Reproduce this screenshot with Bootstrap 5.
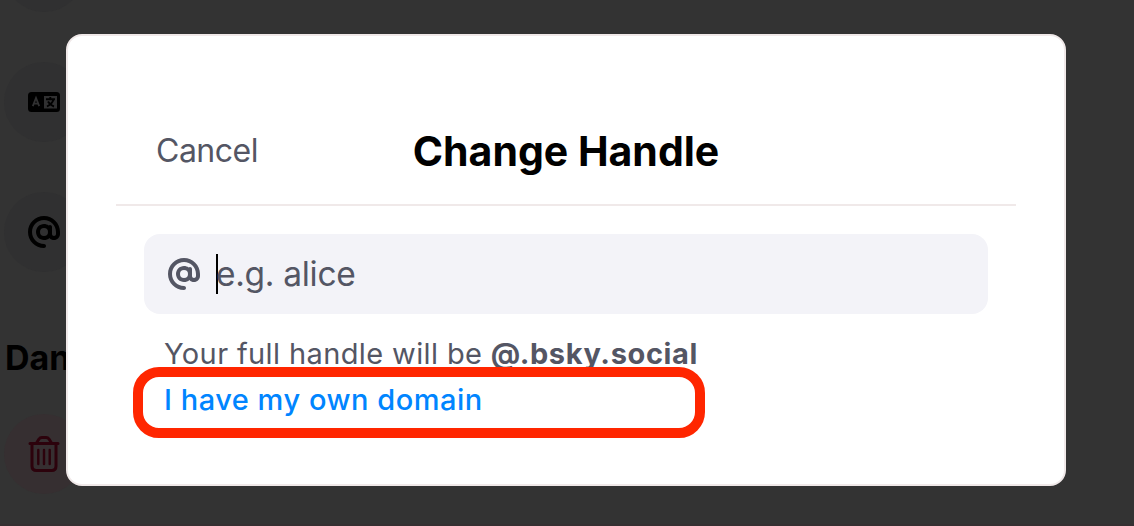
<!DOCTYPE html>
<html lang="en">
<head>
<meta charset="utf-8">
<meta name="viewport" content="width=device-width, initial-scale=1">
<title>Change Handle</title>
<link href="https://cdn.jsdelivr.net/npm/bootstrap@5.3.0/dist/css/bootstrap.min.css" rel="stylesheet">
<style>
body{font-family:Inter,"Liberation Sans",sans-serif;background:#333;height:526px;color:#000}
.settings{height:526px;padding-left:4px;border-bottom:2px solid #352f31}
.disc{width:80px;height:80px;background:#303031;flex:none}
.disc.danger-disc{background:#362f31}
.disc.first{margin-top:-68px}
.disc.lang{margin-top:50px}
.disc.handle{margin-top:50px}
.zone{font-size:34px;font-weight:700;line-height:40px;margin:66px 0 36px 1px;white-space:nowrap}
.sheet{left:66px;top:34px;width:1000px;height:452px;border:2px solid #f0e9e9;border-radius:16px;padding:78px 48px 0}
.sheet-head{height:92px;border-bottom:2px solid #f0e9e9;padding:0 40px;padding-bottom:16px}
.cancel{font-size:32px;letter-spacing:-.5px;color:#545664;line-height:40px}
.title{font-size:41px;font-weight:700;letter-spacing:0;line-height:48px;margin:0}
.field{margin:28px 28px 0;height:80px;border-radius:16px;background:#f3f3f8;padding:0 24px;color:#545664;font-size:34px}
.caret{width:2px;height:40px;background:#000;margin-left:16px}
.hint{letter-spacing:-.3px;margin:0 0 0 -2px;font-size:33.5px}
.line{font-size:29px;letter-spacing:.38px;line-height:46px;color:#545664;padding-left:48px;white-space:nowrap}
.line b{letter-spacing:.62px}
.first-line{margin-top:17px}
.line.own{color:#0085ff;font-weight:500;letter-spacing:.52px}
.marker{left:65px;top:331px;width:572px;height:71px;border:10px solid #ff2600;border-radius:26px}
</style>
</head>
<body class="position-relative overflow-hidden">
<aside class="settings d-flex flex-column overflow-hidden">
  <div class="disc first rounded-circle"></div>
  <div class="disc lang rounded-circle d-flex align-items-center justify-content-center">
    <svg width="32" height="20" viewBox="0 0 32 20"><rect width="32" height="20" rx="3.5"/><path d="M16 4h13v12.500H16z" fill="#303031"/><path d="M4.800 14.200 8 6l3.200 8.200M5.700 11.700h4.600" fill="none" stroke="#303031" stroke-width="1.800"/><path d="M18 7.200h9M22.300 5v2.200M25.500 7.500c-1 3.500-3.500 5.500-6.500 7M20 9.500c1.300 2.500 3 4 6 5" fill="none" stroke="#000" stroke-width="1.900"/></svg>
  </div>
  <div class="disc handle rounded-circle d-flex align-items-center justify-content-center">
    <svg width="32" height="32" viewBox="0 0 512 512"><path id="at" d="M256 64C150 64 64 150 64 256s86 192 192 192c17.700 0 32 14.300 32 32s-14.300 32-32 32C114.600 512 0 397.400 0 256S114.600 0 256 0S512 114.600 512 256v32c0 53-43 96-96 96c-29.300 0-55.600-13.200-73.200-33.900C320 371.100 289.500 384 256 384c-70.700 0-128-57.300-128-128s57.300-128 128-128c27.900 0 53.700 8.900 74.700 24.100c5.700-5 13.100-8.100 21.300-8.100c17.700 0 32 14.300 32 32v112c0 17.700 14.300 32 32 32s32-14.300 32-32V256c0-106-86-192-192-192zm64 192a64 64 0 1 0-128 0a64 64 0 1 0 128 0z"/></svg>
  </div>
  <div class="zone">Dan</div>
  <div class="disc danger-disc rounded-circle d-flex align-items-center justify-content-center">
    <svg width="32" height="36" viewBox="0 0 32 36" fill="none" stroke="#2c020c" stroke-width="3" stroke-linecap="round"><path d="M2 7.500h28M8.500 7 11 3q1-1.500 3-1.500h4q2 0 3 1.500l2.500 4M4 8v22q0 4.500 4.500 4.500h15q4.500 0 4.500-4.500V8"/><path d="M10.300 14v14M16 14v14M21.700 14v14" stroke-width="2.400"/></svg>
  </div>
</aside>
<main class="sheet position-absolute bg-white">
  <header class="sheet-head d-flex align-items-center position-relative">
    <span class="cancel">Cancel</span>
    <h1 class="title position-absolute start-0 end-0 text-center">Change Handle</h1>
  </header>
  <div class="field d-flex align-items-center">
    <svg width="32" height="32" viewBox="0 0 512 512" fill="#545664"><use href="#at"/></svg>
    <span class="caret"></span><span class="hint">e.g. alice</span>
  </div>
  <div class="line first-line">Your full handle will be <b>@.bsky.social</b></div>
  <div class="line own">I have my own domain</div>
  <div class="marker position-absolute"></div>
</main>
<script src="https://cdn.jsdelivr.net/npm/bootstrap@5.3.0/dist/js/bootstrap.bundle.min.js"></script>
</body>
</html>
